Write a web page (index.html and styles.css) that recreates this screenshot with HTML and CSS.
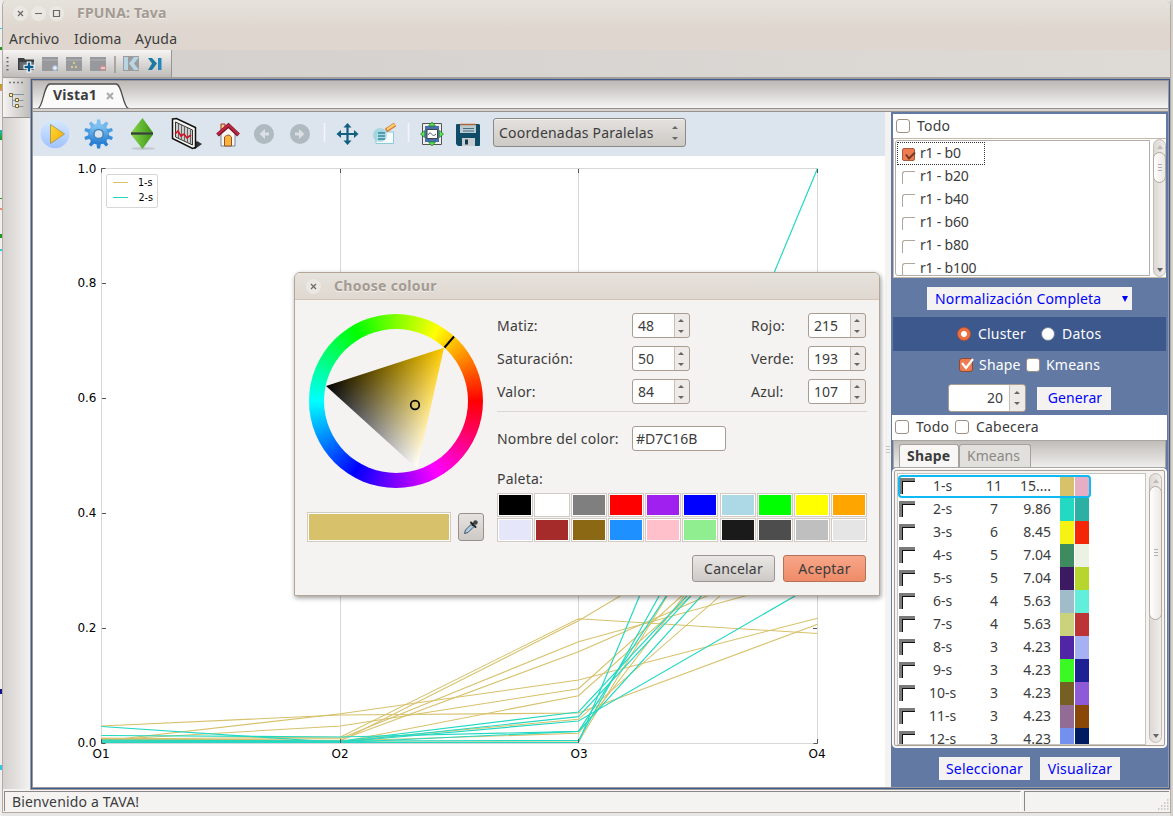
FILE: index.html
```html
<!DOCTYPE html>
<html lang="es">
<head>
<meta charset="utf-8">
<title>FPUNA: Tava</title>
<link rel="stylesheet" href="styles.css">
</head>
<body>
<div class="window">
  <header class="titlebar">
    <span class="wbtn"><svg width="15" height="15"><path d="M5 5l5 5M10 5l-5 5"/></svg></span>
    <span class="wbtn"><svg width="15" height="15"><path d="M4 7.5h7"/></svg></span>
    <span class="wbtn"><svg width="15" height="15"><path d="M4.5 4.5h6v6h-6z"/></svg></span>
    <b class="wtitle">FPUNA: Tava</b>
  </header>
  <nav class="menu"><span class="m1">Archivo</span><span class="m2">Idioma</span><span class="m3">Ayuda</span></nav>
  <div class="coolbar">
    <div class="tools">
      <svg width="168" height="27" viewBox="3 50 168 27">
        <path d="M7.5 57v15" stroke="#666" stroke-width="2" stroke-dasharray="1.5 2.5"/>
        <path d="M18 58h6l1 1.500h9v10.500H18z" fill="#3b3f42"/><path d="M19.500 62h14.500v7H19.500z" fill="#65696b"/>
        <path d="M29 61.500v11M23.500 67h11" stroke="#fff" stroke-width="4.600"/><path d="M29 62.500v9M24.500 67h9" stroke="#075e8d" stroke-width="2.400"/>
        <g fill="#98999c"><path d="M42 57h16v14H42zM66 57h16v14H66zM90 57h16v14H90z"/></g>
        <path d="M42 60h16M66 60h16M90 60h16" stroke="#b4b4b6"/>
        <circle cx="55" cy="68" r="3" fill="#a9bad5"/><path d="M55 66v4M53 68h4" stroke="#fff"/>
        <circle cx="74" cy="63" r="1.2" fill="#d9c58d"/><circle cx="72" cy="67" r="1.2" fill="#d9c58d"/><circle cx="76" cy="67" r="1.2" fill="#d9c58d"/>
        <circle cx="103" cy="68" r="2.8" fill="#d48c91"/><path d="M101 68h4" stroke="#fff"/>
        <path d="M115 56v17" stroke="#989592" stroke-width="1.5"/>
        <path d="M123 56h16v15h-16z" fill="#9a9c9e"/><path d="M124 57h4v13h-4zM134 57h5l-5 6.500 5 6.500h-5l-5-6.500z" fill="#b9d5e3"/>
        <path d="M148 58h4l5 5.500-5 6.500h-4l4-6.500z" fill="#1b789f"/><path d="M158 58h3.500v12H158z" fill="#2685bb"/>
      </svg>
    </div>
  </div>
  <div class="middle">
    <aside class="trim">
      <div class="trimbtn"><svg width="27" height="39" viewBox="3 79 27 39"><path d="M9 83.500h15" stroke="#777" stroke-width="1.500" stroke-dasharray="2 2"/><path d="M13 95.500h11M12.500 97v10M12.500 101.500h11M12.500 107.500h11" stroke="#8297af" fill="none"/><g fill="#fff2bd" stroke="#7b662a"><path d="M9.500 94.500h3v3h-3zM15.500 99.500h3v3h-3zM15.500 105.500h3v3h-3z"/></g></svg></div>
    </aside>
    <main class="editor">
      <div class="tabs">
        <svg class="tabshape" width="110" height="28" viewBox="33 81 110 28"><path d="M38 108.500c5-1 6-24.500 12-24.500h66c6 0 7 23.500 12.500 24.500" fill="#fafafb" stroke="#4d4d4d" stroke-width="1.300"/><path d="M40 109h87" stroke="#f4f7fb" stroke-width="2"/></svg>
        <b class="tabname">Vista1</b>
        <svg class="tabx" width="9" height="9"><path d="M1 1l6 6M7 1l-6 6" stroke="#aaa" stroke-width="2"/></svg>
      </div>
      <div class="tabline"></div>
      <div class="content">
        <section class="plot">
          <div class="plotbar">
            <svg class="icons" width="455" height="44" viewBox="33 112 455 44">
              <defs>
                <linearGradient id="sky" x1="0" y1="0" x2="0" y2="1"><stop offset="0" stop-color="#d6eaff"/><stop offset="1" stop-color="#a0c2ff"/></linearGradient>
                <linearGradient id="play" x1="0" y1="0" x2="1" y2="1"><stop offset="0" stop-color="#ffdb35"/><stop offset="1" stop-color="#f6a900"/></linearGradient>
                <linearGradient id="gear" x1="0" y1="0" x2="0" y2="1"><stop offset="0" stop-color="#8ccbf6"/><stop offset="1" stop-color="#2079d0"/></linearGradient>
                <linearGradient id="grn" x1="0" y1="0" x2="1" y2="0"><stop offset="0" stop-color="#89d550"/><stop offset="1" stop-color="#3b9512"/></linearGradient>
              </defs>
              <circle cx="55" cy="134" r="14.300" fill="url(#sky)"/>
              <path d="M50.500 124.500v19l14-9.500z" fill="url(#play)" stroke="#aa9b65"/>
              <g fill="#4a9be0"><circle cx="98.600" cy="134" r="10.500" fill="url(#gear)"/>
                <path id="tooth" d="M96.400 125l.7-5.500h3l.7 5.500z" fill="#7cc0f2"/>
                <path d="M96.400 125l.7-5.500h3l.7 5.500z" fill="#6fb7ee" transform="rotate(36 98.600 134)"/>
                <path d="M96.400 125l.7-5.500h3l.7 5.500z" transform="rotate(72 98.600 134)"/>
                <path d="M96.400 125l.7-5.500h3l.7 5.500z" fill="#3a8dd8" transform="rotate(108 98.600 134)"/>
                <path d="M96.400 125l.7-5.500h3l.7 5.500z" fill="#2a80d2" transform="rotate(144 98.600 134)"/>
                <path d="M96.400 125l.7-5.500h3l.7 5.500z" fill="#2a80d2" transform="rotate(180 98.600 134)"/>
                <path d="M96.400 125l.7-5.500h3l.7 5.500z" fill="#2a80d2" transform="rotate(216 98.600 134)"/>
                <path d="M96.400 125l.7-5.500h3l.7 5.500z" fill="#3a8dd8" transform="rotate(252 98.600 134)"/>
                <path d="M96.400 125l.7-5.500h3l.7 5.500z" transform="rotate(288 98.600 134)"/>
                <path d="M96.400 125l.7-5.500h3l.7 5.500z" fill="#6fb7ee" transform="rotate(324 98.600 134)"/>
              </g>
              <circle cx="98.600" cy="134" r="4.600" fill="#dce4ee" stroke="#4385bc" stroke-width="1.500"/>
              <ellipse cx="143" cy="148.500" rx="12" ry="1.500" fill="#c1c8d1"/>
              <path d="M131 132.500l11.500-14.500L153 132.500zM131 134.500h22L142.500 149z" fill="url(#grn)"/><path d="M131 133.500h22" stroke="#30442a" stroke-width="2.500"/>
              <path d="M190 147l7-6 5 3-7 5z" fill="#333"/><path d="M172.500 119l4-.5 19 9v20l-3 1-20-10z" fill="#f5f5f0" stroke="#111" stroke-width="1.500"/><path d="M175.500 122l17 8v15l-17-8z" fill="#ccc" stroke="#333"/><path d="M178.500 124v14M181.500 125v15M184.500 127v14M187.500 128v15M190.500 130v14" stroke="#666"/><path d="M175 134l3-3 3 5 3-2 3 4 4-3" fill="none" stroke="#d31227" stroke-width="1.600"/>
              <path d="M221 124h4v7h-4z" fill="#fbd27a" stroke="#a52b30"/><path d="M221 132l7-7 7 7v14h-14z" fill="#f8f7ef" stroke="#7d8494"/><path d="M224.500 146v-9q4-4 7 0v9z" fill="#fdb13d" stroke="#8d552d"/><path d="M217.500 135l11-9.500 10 9.500" fill="none" stroke="#7d132a" stroke-width="4"/><path d="M217.500 134.500l11-9.500 10 9.500" fill="none" stroke="#c12742" stroke-width="2"/>
              <g><circle cx="264" cy="134" r="10" fill="#aeb9c0"/><circle cx="300" cy="134" r="10" fill="#aeb9c0"/><path d="M265 129l-5.500 5 5.500 5v-3.500h4v-3h-4zM299 129l5.500 5-5.500 5v-3.500h-4v-3h4z" fill="#dae0e4"/></g>
              <path d="M324.500 123v19M408.500 123v19" stroke="#f5f5f7" stroke-width="1.500"/>
              <path d="M347.500 126v16M339 134h17" stroke="#11607f" stroke-width="2.200"/><path d="M347.500 123l-4 4.500h8zM347.500 145l-4-4.500h8zM336.500 134l4.500-4v8zM358.500 134l-4.500-4v8z" fill="#11607f"/>
              <path d="M376 132h17.500v11.500H376z" fill="#f7fcff" stroke="#8acbd7"/><circle cx="380" cy="135" r="7" fill="#9bd2dd" fill-opacity=".8"/><path d="M378 133h7M378 136h7M378 139h7" stroke="#35889e" stroke-width="1.300"/><path d="M386 130.500l9-6" stroke="#d4752d" stroke-width="4.200"/><path d="M387 129.500l7.500-5" stroke="#ffd070" stroke-width="2.300"/>
              <path d="M422.500 123.500h19v21h-19z" fill="#eee" stroke="#555"/><path d="M425 126h14v16h-14z" fill="#476fac"/><path d="M427 129.500h10.500v9H427z" fill="#fff" stroke="#444"/><path d="M428 135c3-6 4 4 8-1" fill="none" stroke="#555"/><path d="M432 122l-3.500 4h7zM432 146l-3.500-4h7zM420.500 134l4-3.500v7zM443.500 134l-4-3.500v7z" fill="#53e94c" stroke="#247725" stroke-width=".7"/>
              <path d="M457 124q-1 0-1 1v19l2 2h21q1 0 1-1v-20l-1-1z" fill="#104b68"/><path d="M460 124h16v9h-16z" fill="#b9cad0"/><path d="M460 124.500h16" stroke="#b06836" stroke-width="1.500"/><path d="M463 128.500h11M463 131h11" stroke="#456f82"/><path d="M462 138h13v8h-13z" fill="#c9cdd0"/><path d="M465 139.500h3v5h-3z" fill="#123b52"/>
            </svg>
            <div class="combo"><span>Coordenadas Paralelas</span><i class="arrows"></i></div>
          </div>
          <svg class="chart" width="852" height="631" viewBox="33 156 852 631">
            <path d="M101.500 168.500H817.500V743.500H101.500zM340.500 168.500V743.500M578.500 168.500V743.500" fill="none" stroke="#d7d7d7"/>
            <g fill="none" stroke="#d7c16b" stroke-width="1.100">
              <path d="M101.500 739L340.500 737L578.500 618.700L817.500 633.500"/>
              <path d="M101.500 738L340.500 741L578.500 620.700L817.500 479"/>
              <path d="M101.500 740L340.500 738.500L578.500 641.700L817.500 576"/>
              <path d="M101.500 741L340.500 740L578.500 651.700L817.500 548"/>
              <path d="M101.500 741L340.500 713.700L578.500 680L817.500 618.200"/>
              <path d="M101.500 740L340.500 726L578.500 688.700L817.500 474"/>
              <path d="M101.500 740L340.500 742L578.500 695.700L817.500 483"/>
              <path d="M101.500 726L340.500 715L578.500 713L817.500 624.200"/>
              <path d="M101.500 739L340.500 741L578.500 719.300L817.500 511"/>
              <path d="M101.500 738.500L340.500 741L578.500 733.300L817.500 422"/>
              <path d="M101.500 741L340.500 742L578.500 742L817.500 348"/>
            </g>
            <g fill="none" stroke="#24d8c2" stroke-width="1.200">
              <path d="M101.500 726.500L340.500 742.500L578.500 742.500L817.500 168.500"/>
              <path d="M101.500 735.500L340.500 737L578.500 731.300L817.500 363"/>
              <path d="M101.500 740L340.500 741L578.500 712L817.500 456"/>
              <path d="M101.500 741L340.500 742L578.500 716.700L817.500 460"/>
              <path d="M101.500 742L340.500 742L578.500 721L817.500 583"/>
              <path d="M101.500 742.500L340.500 742.500L578.500 731.300L817.500 468"/>
              <path d="M101.500 741L340.500 741L578.500 740.500L817.500 312"/>
            </g>
            <path d="M102 283.500h4M102 398.500h4M102 513.500h4M102 628.500h4M813 283.500h4M813 398.500h4M813 513.500h4M813 628.500h4M101.500 172.500v-4h4M101.500 739v4.500h4M340.500 169v4M578.500 169v4M817.500 169v4M340.500 739v4M578.500 739v4M817.500 739v4.500h-4" fill="none" stroke="#555"/>
            <g class="tick" text-anchor="end"><text x="96.500" y="173">1.0</text><text x="96.500" y="287">0.8</text><text x="96.500" y="402">0.6</text><text x="96.500" y="517">0.4</text><text x="96.500" y="632">0.2</text><text x="96.500" y="747">0.0</text></g>
            <g class="tick" text-anchor="middle"><text x="101" y="758">O1</text><text x="340" y="758">O2</text><text x="579" y="758">O3</text><text x="817" y="758">O4</text></g>
            <rect x="106.500" y="174.500" width="51" height="33" rx="1.500" fill="#fff" stroke="#d7d7d7"/>
            <path d="M113 182.500h15" stroke="#d7c16b" stroke-width="1.200"/><path d="M113 197.500h15" stroke="#24d8c2" stroke-width="1.200"/>
            <g class="leg"><text x="138" y="186">1-s</text><text x="138.500" y="201">2-s</text></g>
          </svg>
        </section>
        <div class="sash"></div>
        <section class="side">
          <div class="all1"><i class="cb"></i><span>Todo</span></div>
          <div class="listbox">
            <div class="list">
              <div class="li sel"><i class="lcb on"><svg width="13" height="13"><path d="M3 5.500l3 4 6-6" fill="none" stroke="#733923" stroke-width="2"/></svg></i>r1 - b0</div>
              <div class="li"><i class="lcb"></i>r1 - b20</div>
              <div class="li"><i class="lcb"></i>r1 - b40</div>
              <div class="li"><i class="lcb"></i>r1 - b60</div>
              <div class="li"><i class="lcb"></i>r1 - b80</div>
              <div class="li"><i class="lcb"></i>r1 - b100</div>
            </div>
            <div class="scroll s1"><i class="up"></i><i class="thumb"></i><i class="dn"></i></div>
          </div>
          <div class="norm"><div class="flat normbtn"><span>Normalización Completa</span><i class="tri"></i></div></div>
          <div class="mode"><i class="radio on"></i><span class="clu">Cluster</span><i class="radio"></i><span>Datos</span></div>
          <div class="algo"><i class="cb on"><svg width="16" height="14"><path d="M3 6l4 5 7-9" fill="none" stroke="#fff" stroke-width="2.200"/></svg></i><span class="shp">Shape</span><i class="cb"></i><span>Kmeans</span></div>
          <div class="gen"><div class="spin big"><span>20</span><i class="arrows"></i></div><div class="flat genbtn">Generar</div></div>
          <div class="all2"><i class="cb"></i><span class="t2">Todo</span><i class="cb"></i><span>Cabecera</span></div>
          <div class="subtabs"><b class="st on">Shape</b><span class="st">Kmeans</span></div>
          <div class="tableframe">
            <div class="table">
              <div class="row cur"><i class="tcb"></i><span class="nm">1-s</span><span class="n">11</span><span class="p">15....</span><i class="c" style="background:#d7c16b"></i><i class="c" style="background:#e6aec5"></i></div>
              <div class="row"><i class="tcb"></i><span class="nm">2-s</span><span class="n">7</span><span class="p">9.86</span><i class="c" style="background:#23d9c4"></i><i class="c" style="background:#2bb0a3"></i></div>
              <div class="row"><i class="tcb"></i><span class="nm">3-s</span><span class="n">6</span><span class="p">8.45</span><i class="c" style="background:#f6f314"></i><i class="c" style="background:#f52608"></i></div>
              <div class="row"><i class="tcb"></i><span class="nm">4-s</span><span class="n">5</span><span class="p">7.04</span><i class="c" style="background:#3f8b60"></i><i class="c" style="background:#ebf2e4"></i></div>
              <div class="row"><i class="tcb"></i><span class="nm">5-s</span><span class="n">5</span><span class="p">7.04</span><i class="c" style="background:#3c1963"></i><i class="c" style="background:#b7d62d"></i></div>
              <div class="row"><i class="tcb"></i><span class="nm">6-s</span><span class="n">4</span><span class="p">5.63</span><i class="c" style="background:#a0bccb"></i><i class="c" style="background:#61eeda"></i></div>
              <div class="row"><i class="tcb"></i><span class="nm">7-s</span><span class="n">4</span><span class="p">5.63</span><i class="c" style="background:#cad27c"></i><i class="c" style="background:#bd3436"></i></div>
              <div class="row"><i class="tcb"></i><span class="nm">8-s</span><span class="n">3</span><span class="p">4.23</span><i class="c" style="background:#5126a5"></i><i class="c" style="background:#a5b1f3"></i></div>
              <div class="row"><i class="tcb"></i><span class="nm">9-s</span><span class="n">3</span><span class="p">4.23</span><i class="c" style="background:#3bf922"></i><i class="c" style="background:#1d2194"></i></div>
              <div class="row"><i class="tcb"></i><span class="nm">10-s</span><span class="n">3</span><span class="p">4.23</span><i class="c" style="background:#765f22"></i><i class="c" style="background:#8e5ad8"></i></div>
              <div class="row"><i class="tcb"></i><span class="nm">11-s</span><span class="n">3</span><span class="p">4.23</span><i class="c" style="background:#926c94"></i><i class="c" style="background:#894807"></i></div>
              <div class="row"><i class="tcb"></i><span class="nm">12-s</span><span class="n">3</span><span class="p">4.23</span><i class="c" style="background:#7390ee"></i><i class="c" style="background:#001b5f"></i></div>
            </div>
            <div class="scroll s2"><i class="up"></i><i class="thumb"></i><i class="dn"></i></div>
          </div>
          <div class="acts"><div class="flat selb">Seleccionar</div><div class="flat visb">Visualizar</div></div>
        </section>
      </div>
    </main>
  </div>
  <footer class="status"><div class="msg">Bienvenido a TAVA!</div><div class="msg2"><svg width="12" height="12"><path d="M10 1h2M7 4h5M4 7h8M1 10h11" stroke="#c4bfba" stroke-width="1.500" stroke-dasharray="1.500 1.500"/></svg></div></footer>
</div>

<div class="dialog">
  <header class="dtitle"><span class="wbtn"><svg width="15" height="15"><path d="M5 5l5 5M10 5l-5 5"/></svg></span><b>Choose colour</b></header>
  <div class="dbody">
    <div class="picker">
      <div class="wheel">
        <svg width="174" height="174" viewBox="309 314 174 174">
          <defs>
            <linearGradient id="hue" gradientUnits="userSpaceOnUse" x1="371.500" y1="427.200" x2="444" y2="347.700"><stop offset="0" stop-color="#000"/><stop offset="1" stop-color="#fc0"/></linearGradient>
            <linearGradient id="wht" gradientUnits="userSpaceOnUse" x1="385" y1="366.900" x2="417" y2="468.500"><stop offset="0" stop-color="#000"/><stop offset="1" stop-color="#fff"/></linearGradient>
            <clipPath id="tri"><path d="M444 347.700L326 386L417 468.500z"/></clipPath>
          </defs>
          <circle cx="396" cy="401" r="72" fill="#f4f3f1"/>
          <g class="mix" clip-path="url(#tri)"><rect x="320" y="340" width="130" height="135" fill="url(#hue)"/><rect class="add" x="320" y="340" width="130" height="135" fill="url(#wht)"/></g>
          <path d="M444.500 347.500l9.500-11" stroke="#000" stroke-width="2"/>
          <circle cx="415" cy="405" r="4.300" fill="none" stroke="#000" stroke-width="1.700"/>
        </svg>
      </div>
      <div class="sample"><div class="well swatch"><i style="background:#d7c16b"></i></div>
        <div class="drop"><svg width="24" height="26"><path d="M5.500 19.500l1-3.500 6-6 2.500 2.500-6 6z" fill="#a8cbe8" stroke="#4a5560"/><path d="M12 8.500l4.500 4.500M13.500 11l3-3" stroke="#262626" stroke-width="2" stroke-linecap="round"/><circle cx="16.500" cy="8.500" r="2.200" fill="#444"/></svg></div>
      </div>
    </div>
    <div class="form">
      <div class="fields">
        <label>Matiz:</label><div class="spin"><span>48</span><i class="arrows"></i></div><label>Rojo:</label><div class="spin"><span>215</span><i class="arrows"></i></div>
        <label>Saturación:</label><div class="spin"><span>50</span><i class="arrows"></i></div><label>Verde:</label><div class="spin"><span>193</span><i class="arrows"></i></div>
        <label>Valor:</label><div class="spin"><span>84</span><i class="arrows"></i></div><label>Azul:</label><div class="spin"><span>107</span><i class="arrows"></i></div>
      </div>
      <div class="rule"></div>
      <div class="namerow"><label>Nombre del color:</label><div class="entry">#D7C16B</div></div>
      <div class="pal">Paleta:</div>
      <div class="palette">
        <div class="well"><i style="background:#000"></i></div><div class="well"><i style="background:#fff"></i></div><div class="well"><i style="background:#7f7f7f"></i></div><div class="well"><i style="background:#f00"></i></div><div class="well"><i style="background:#a020f0"></i></div><div class="well"><i style="background:#00f"></i></div><div class="well"><i style="background:#add8e6"></i></div><div class="well"><i style="background:#0f0"></i></div><div class="well"><i style="background:#ff0"></i></div><div class="well"><i style="background:#ffa500"></i></div>
        <div class="well"><i style="background:#e6e6fa"></i></div><div class="well"><i style="background:#a52a2a"></i></div><div class="well"><i style="background:#8b6914"></i></div><div class="well"><i style="background:#1e90ff"></i></div><div class="well"><i style="background:#ffc0cb"></i></div><div class="well"><i style="background:#90ee90"></i></div><div class="well"><i style="background:#1a1a1a"></i></div><div class="well"><i style="background:#4d4d4d"></i></div><div class="well"><i style="background:#bfbfbf"></i></div><div class="well"><i style="background:#e5e5e5"></i></div>
      </div>
      <div class="dbtns"><div class="btn">Cancelar</div><div class="btn ok">Aceptar</div></div>
    </div>
  </div>
</div>
</body>
</html>
```
FILE: styles.css
```css
* { box-sizing: border-box; }
body {
  margin: 0; width: 1173px; height: 816px; overflow: hidden; position: relative; padding: 0 2px;
  background:
    linear-gradient(#32c8dc, #32c8dc) 0 28px / 2px 1px no-repeat,
    linear-gradient(#1f9a1f, #1f9a1f) 0 47px / 2px 3px no-repeat,
    linear-gradient(#b0a410, #e89070) 0 84px / 2px 7px no-repeat,
    linear-gradient(#22b8b8, #1f9a1f) 0 130px / 2px 10px no-repeat,
    linear-gradient(#1f9a1f, #1f9a1f) 0 198px / 2px 1px no-repeat,
    linear-gradient(#e89070, #e89070) 0 208px / 2px 2px no-repeat,
    linear-gradient(#1f9a1f, #1f9a1f) 0 234px / 2px 4px no-repeat,
    linear-gradient(#32c8dc, #32c8dc) 0 249px / 2px 2px no-repeat,
    linear-gradient(#14148a, #14148a) 0 689px / 2px 5px no-repeat,
    linear-gradient(#32c8dc, #32c8dc) 0 765px / 2px 5px no-repeat,
    linear-gradient(90deg, #eeeeee 0 2px, transparent 2px 1170px, #d4d0cc 1170px),
    #e8e6e4;
  font: 14px/20px "Noto Sans", sans-serif; color: #3c3c3c; letter-spacing: .2px;
}
i { font-style: normal; display: block; flex: none; }
svg { display: block; flex: none; }
span, b, label { white-space: nowrap; }
.window { width: 1169px; height: 813px; display: flex; flex-direction: column; background: #f4f3f1; border: 1px solid #b5aaa0; border-top: 0; border-radius: 6px 6px 0 0; overflow: hidden; }
.titlebar { height: 27px; display: flex; align-items: center; padding-left: 10px; gap: 3px; background: linear-gradient(#e6e2dc, #dfd8d0); }
.wbtn { width: 15px; height: 15px; border-radius: 50%; background: #ebe8e4; }
.wbtn svg { stroke: #6b6866; stroke-width: 1.2; fill: none; }
.wtitle { margin-left: 10px; color: #a29a93; text-shadow: 0 1px #f3f0ec; }
.menu { height: 23px; display: flex; align-items: center; padding: 2px 0 0 6px; background: #dfd7cf; }
.m1 { width: 65px; }
.m2 { width: 61px; }
.coolbar { height: 28px; background: linear-gradient(90deg, #d2cfcc, #dedbd7); border-bottom: 1px solid #a39f9b; }
.tools { width: 169px; height: 27px; border-right: 1px solid #999490; background: linear-gradient(#f6f5f4, #bebbb8); }
.middle { height: 712px; display: flex; }
.trim { width: 27px; background: linear-gradient(90deg, #d3d0cd, #f3f2f0); }
.trimbtn { height: 40px; background: linear-gradient(90deg, #f5f4f3, #bfbcb9); border-bottom: 1px solid #999490; }
.editor { width: 1139px; height: 710px; margin: 1px 0 0 1px; border: 1px solid #3f5a90; outline: 1px solid #a09c98; padding: 1px; background: #99989a; display: flex; flex-direction: column; flex: none; }
.tabs { height: 27px; display: flex; align-items: center; background: linear-gradient(#bbb8b5, #f6f5f4); }
.tabshape { margin: 1px -90px -1px 0; }
.tabname { width: 53px; margin-top: 2px; }
.tabx { margin-top: 5px; }
.tabline { height: 4px; background: #d5d2cf; border-top: 1px solid #94918e; border-bottom: 1px solid #94918e; }
.content { display: flex; height: 675px; }
.plot { width: 852px; background: #fff; flex: none; }
.plotbar { height: 44px; background: #dce4ee; display: flex; align-items: center; }
.icons { margin-right: 5px; }
.combo { width: 193px; height: 29px; margin-top: -3px; border: 1px solid #8d8985; border-radius: 3px; background: linear-gradient(#e4e2df, #cdc9c5); padding: 2px 6px 0 5px; display: flex; align-items: center; justify-content: space-between; box-shadow: inset 0 1px #f1f0ee; }
.arrows { width: 6px; margin-right: 1px; height: 14px; display: flex; flex-direction: column; justify-content: space-between; }
.arrows::before, .arrows::after { content: ""; border: 3px solid transparent; }
.arrows::before { border-top: 0; border-bottom-color: #696663; }
.arrows::after { border-bottom: 0; border-top-color: #696663; }
.chart { letter-spacing: 0; }
.tick { font: 12px "DejaVu Sans", sans-serif; fill: #000; }
.leg { font: 9.6px "DejaVu Sans", sans-serif; fill: #000; }
.sash { width: 6px; flex: none; background: repeating-linear-gradient(#c9c5c1 0 1px, transparent 1px 3px) 1px 334px / 4px 7px no-repeat #f4f3f1; }
.side { width: 277px; flex: none; background: #6279a3; padding: 2px 2px 0; }
.all1 { height: 24px; background: #fff; display: flex; align-items: center; padding-left: 3px; gap: 7px; }
.cb { width: 14px; height: 14px; border: 1px solid #9d8f84; border-radius: 3px; background: #fff; }
.cb.on { background: #ee7c50; border-color: #8c4a30; }
.cb.on svg { margin: -2px 0 0 -1px; }
.listbox { height: 140px; background: #fff; display: flex; border: 1px solid #c5b9ad; border-right: 0; }
.list { width: 255px; padding: 1px; margin: 1px 0 1px 1px; border: 1px solid #b1aeab; border-radius: 3px 0 0 3px; overflow: hidden; }
.li { height: 23px; display: flex; align-items: center; gap: 5px; padding-left: 5px; width: 88px; letter-spacing: -.2px; white-space: nowrap; }
.li.sel { outline: 1px dotted #333; outline-offset: -1px; }
.lcb { width: 13px; height: 13px; border: 1px solid #b0a69c; border-width: 1px 0 0 1px; border-radius: 3px 0 0 0; margin-top: 3px; }
.lcb.on { background: #ee7c50; border: 1px solid #a85b3c; border-radius: 2px; }
.scroll { width: 13px; border: 1px solid #c4bcb4; border-radius: 7px; background: linear-gradient(90deg, #ddd9d5, #efedeb); display: flex; flex-direction: column; }
.scroll .thumb { width: 13px; margin-left: -1px; border: 1px solid #b3a99f; border-radius: 7px; background: repeating-linear-gradient(#b5aea8 0 1px, transparent 1px 3px) 50% 50% / 4px 7px no-repeat, linear-gradient(90deg, #fff, #ebe8e5); }
.s1 { margin-left: 3px; }
.s1 .thumb { height: 31px; }
.s2 .thumb { height: 134px; }
.up { border: 3px solid transparent; border-top-width: 0; border-bottom: 4px solid #c0bbb6; width: 6px; margin: 5px auto 3px; }
.dn { border: 3px solid transparent; border-top: 4px solid #666; width: 6px; margin: auto auto 1px; }
.norm { height: 39px; display: flex; justify-content: center; padding-top: 9px; }
.flat { height: 23px; background: #f4f3f1; color: #00f; display: flex; align-items: center; justify-content: center; white-space: nowrap; }
.normbtn { width: 205px; justify-content: space-between; padding: 1px 4px 0 8px; }
.tri { border: 3.5px solid transparent; border-top: 6px solid #00f; border-bottom: 0; }
.mode { height: 34px; background: #3c588c; color: #fff; display: flex; align-items: center; padding-left: 64px; gap: 7px; }
.radio { width: 14px; height: 14px; border-radius: 50%; background: #fff; border: 1px solid #6d7b95; }
.radio.on { background: radial-gradient(#fff 0 2.500px, #ee7041 3.500px); border-color: #b6532d; }
.clu { width: 48px; margin-right: 8px; }
.algo { height: 28px; color: #fff; display: flex; align-items: center; padding-left: 66px; gap: 6px; }
.shp { width: 41px; }
.gen { height: 36px; display: flex; align-items: center; padding: 3px 0 0 55px; gap: 11px; }
.genbtn { width: 74px; letter-spacing: .1px; padding-left: 2px; }
.all2 { height: 25px; margin: 0 -1px; background: #fff; display: flex; align-items: center; padding-left: 3px; gap: 7px; }
.t2 { width: 32px; }
.subtabs { height: 28px; background: linear-gradient(#c0bdb9, #eeedeb); border: 1px solid #a9a5a1; display: flex; align-items: flex-end; padding-left: 5px; }
.st { height: 23px; width: 72px; border: 1px solid #a5a19d; border-bottom: 0; border-radius: 3px 3px 0 0; padding-left: 7px; line-height: 22px; color: #8b8885; background: #e2e0dd; letter-spacing: 0; }
.st.on { width: 60px; color: #3c3c3c; background: #f8f7f6; letter-spacing: .2px; }
.tableframe { height: 280px; margin: 0 -1px; background: #f4f3f1; border: 1px solid #fff; outline: 1px solid #a9a097; outline-offset: -3px; display: flex; padding: 4px; justify-content: space-between; border-radius: 4px; }
.table { width: 249px; background: #fff; border: 1px solid #c8c4c0; overflow: hidden; padding: 1px 0 0 1px; height: 272px; }
.row { height: 23px; width: 191px; display: flex; align-items: center; position: relative; letter-spacing: 0; }
.row.cur::after { content: ""; position: absolute; inset: 0 -1px 0 -1px; border: 2px solid #0fb9f2; border-radius: 4px; }
.row > * { flex: none; }
.tcb { width: 16px; height: 16px; border: 3px solid #7b7b7b; border-right: 0; border-bottom: 0; box-shadow: inset 1px 1px #111; margin-top: -1px; }
.nm { width: 53px; text-align: center; margin-left: 1px; }
.n { width: 40px; text-align: center; margin-left: 5px; }
.p { width: 37px; text-align: right; margin-right: 9px; }
.c { width: 14px; height: 23px; margin-right: 1px; }
.acts { height: 39px; display: flex; align-items: center; justify-content: center; gap: 10px; padding-top: 2px; }
.acts .flat { padding-top: 1px; }
.selb { width: 91px; }
.visb { width: 80px; }
.spin { height: 25px; width: 58px; border: 1px solid #a99c91; border-radius: 3px; display: flex; align-items: center; background: linear-gradient(90deg, #fff 0 41px, #c7beb5 41px 42px, #edeae7 42px); justify-content: space-between; padding: 0 4px 0 5px; letter-spacing: 0; }
.spin.big { width: 78px; height: 28px; background: linear-gradient(90deg, #fff 0 60px, #c7beb5 60px 61px, #edeae7 61px); padding-left: 38px; }
.status { height: 23px; display: flex; gap: 3px; padding: 2px 1px 1px; }
.msg { width: 1017px; border: 1px solid #8b8987; border-bottom: 0; border-right-color: #fff; padding-left: 7px; line-height: 19px; letter-spacing: .15px; }
.msg2 { flex: 1; border-top: 1px solid #8b8987; border-left: 1px solid #8b8987; display: flex; align-items: flex-end; justify-content: flex-end; }
.dialog { position: absolute; left: 294px; top: 272px; width: 586px; height: 324px; border: 1px solid #b5a597; border-radius: 6px 6px 0 0; background: #f4f3f1; box-shadow: 1px 2px 5px rgba(0,0,0,.4); }
.dtitle { height: 27px; display: flex; align-items: center; padding-left: 11px; gap: 13px; background: linear-gradient(#e6e2dc, #dfd8d0); border-bottom: 1px solid #d4c4b7; border-radius: 5px 5px 0 0; color: #a29a93; text-shadow: 0 1px #f3f0ec; letter-spacing: .3px; }
.dbody { display: flex; padding: 13px 0 0 12px; gap: 13px; }
.picker { width: 177px; }
.wheel { width: 174px; height: 174px; margin: 1px 0 0 2px; border-radius: 50%; background: conic-gradient(from 90deg, #f00, #f0f, #00f, #0ff, #0f0, #ff0, #f00); }
.mix { isolation: isolate; }
.add { mix-blend-mode: plus-lighter; }
.sample { display: flex; margin-top: 24px; justify-content: space-between; }
.well { border: 1px solid #d3cbc3; background: #fff; padding: 1px; }
.well i { width: 100%; height: 100%; }
.swatch { width: 144px; height: 30px; }
.drop { width: 26px; height: 28px; margin-top: 1px; border: 1px solid #96918c; border-radius: 3px; background: linear-gradient(#e5e3e0, #cdc9c5); }
.form { width: 370px; flex: none; }
.fields { display: grid; grid-template-columns: 135px 119px 57px 58px; row-gap: 8px; align-items: center; }
.rule { height: 1px; background: #dad7d3; margin-top: 7px; width: 370px; }
.namerow { display: flex; align-items: center; margin-top: 14px; }
.namerow label { width: 135px; }
.entry { width: 94px; height: 25px; border: 1px solid #a99c91; border-radius: 3px; background: #fff; padding-left: 3px; line-height: 23px; letter-spacing: 0; }
.pal { margin-top: 18px; height: 24px; }
.palette { display: grid; grid-template-columns: repeat(10, 36px); column-gap: 1.1px; row-gap: 1px; }
.palette .well { height: 24px; }
.dbtns { display: flex; justify-content: flex-end; gap: 8px; margin: 13px 1px 0 0; }
.btn { width: 83px; height: 27px; border: 1px solid #9b9691; border-radius: 3px; background: linear-gradient(#e9e8e5, #cdc9c6); text-align: center; line-height: 25px; }
.ok { background: linear-gradient(#f8a68a, #ef8b67); border-color: #b57059; }
```
